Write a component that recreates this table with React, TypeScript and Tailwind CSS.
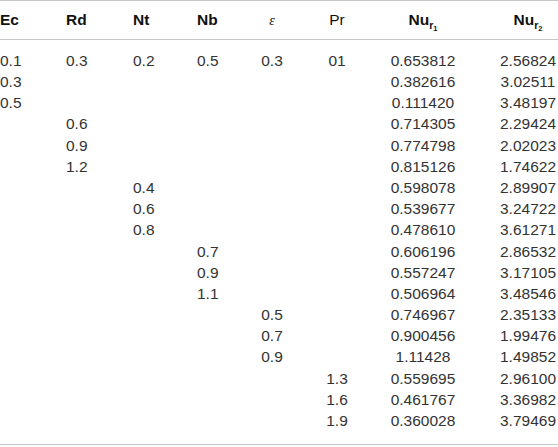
const rows: string[][] = [
  ["0.1", "0.3", "0.2", "0.5", "0.3", "01", "0.653812", "2.56824"],
  ["0.3", "", "", "", "", "", "0.382616", "3.02511"],
  ["0.5", "", "", "", "", "", "0.111420", "3.48197"],
  ["", "0.6", "", "", "", "", "0.714305", "2.29424"],
  ["", "0.9", "", "", "", "", "0.774798", "2.02023"],
  ["", "1.2", "", "", "", "", "0.815126", "1.74622"],
  ["", "", "0.4", "", "", "", "0.598078", "2.89907"],
  ["", "", "0.6", "", "", "", "0.539677", "3.24722"],
  ["", "", "0.8", "", "", "", "0.478610", "3.61271"],
  ["", "", "", "0.7", "", "", "0.606196", "2.86532"],
  ["", "", "", "0.9", "", "", "0.557247", "3.17105"],
  ["", "", "", "1.1", "", "", "0.506964", "3.48546"],
  ["", "", "", "", "0.5", "", "0.746967", "2.35133"],
  ["", "", "", "", "0.7", "", "0.900456", "1.99476"],
  ["", "", "", "", "0.9", "", "1.11428", "1.49852"],
  ["", "", "", "", "", "1.3", "0.559695", "2.96100"],
  ["", "", "", "", "", "1.6", "0.461767", "3.36982"],
  ["", "", "", "", "", "1.9", "0.360028", "3.79469"],
];

const grid = "grid grid-cols-[66px_67px_64px_53px_44px_86px_86px_92px]";
const align = ["text-left", "text-left", "text-left", "text-left", "text-center", "text-center", "text-center", "text-center pl-[32px]"];

function Nu({ n }: { n: string }) {
  return (
    <span className="font-bold">
      Nu
      <span className="relative top-[4px] text-[10.5px]">
        r<span className="relative top-[2px] text-[7.5px]">{n}</span>
      </span>
    </span>
  );
}

export default function App() {
  return (
    <div className="w-[558px] h-[447px] bg-white font-['Liberation_Sans',Arial,sans-serif] text-[15.5px] text-[#333]">
      <div className={`${grid} h-[40px] items-center border-t border-b border-[#c8c8c8] text-[#111]`}>
        <div className="font-bold">Ec</div>
        <div className="font-bold">Rd</div>
        <div className="font-bold">Nt</div>
        <div className="font-bold">Nb</div>
        <div className="text-center font-['Liberation_Serif',serif] italic text-[14px]">ε</div>
        <div className="text-center">Pr</div>
        <div className="text-center"><Nu n="1" /></div>
        <div className="text-center pl-[32px]"><Nu n="2" /></div>
      </div>
      <div className="pt-[10px] pb-[13px] border-b border-[#c8c8c8]">
        {rows.map((r, i) => (
          <div key={i} className={`${grid} h-[21.2px] items-center leading-none`}>
            {r.map((c, j) => (
              <div key={j} className={align[j]}>{c}</div>
            ))}
          </div>
        ))}
      </div>
    </div>
  );
}
